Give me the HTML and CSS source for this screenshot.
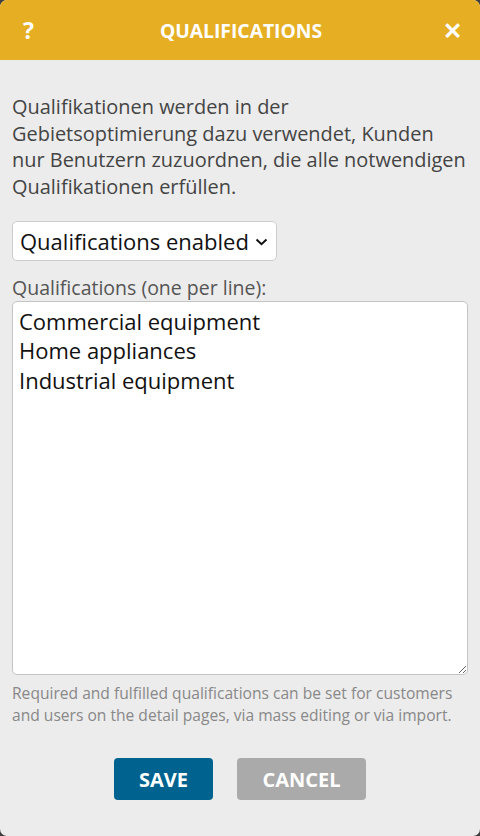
FILE: index.html
```html
<!DOCTYPE html>
<html lang="de">
<head>
  <meta charset="UTF-8" />
  <meta name="viewport" content="width=device-width, initial-scale=1" />
  <title>Qualifications</title>
  <link rel="stylesheet" href="styles.css">
</head>
<body>

<div class="dialog">
  <header class="dialog-header">
    <span class="help-btn">?</span>
    <span class="title">QUALIFICATIONS</span>
    <span class="close-btn">✕</span>
  </header>

  <main class="dialog-body">
    <p class="intro">Qualifikationen werden in der Gebietsoptimierung dazu verwendet, Kunden nur Benutzern zuzuordnen, die alle notwendigen Qualifikationen erfüllen.</p>

    <div class="select-wrap">
      <select class="mode-select">
        <option>Qualifications enabled</option>
        <option>Qualifications disabled</option>
      </select>
      <!-- eigener Pfeil statt des Browser-Pfeils -->
      <svg class="chevron" width="13" height="8" viewBox="0 0 13 8">
        <path d="M1.5 1.5 L6.5 6.2 L11.5 1.5" fill="none" stroke="#111" stroke-width="2" />
      </svg>
    </div>

    <label class="field-label" for="qualList">Qualifications (one per line):</label>
    <textarea id="qualList" class="qual-list">Commercial equipment
Home appliances
Industrial equipment</textarea>

    <p class="hint">Required and fulfilled qualifications can be set for customers and users on the detail pages, via mass editing or via import.</p>
  </main>

  <footer class="dialog-footer">
    <button class="btn btn-save">SAVE</button>
    <button class="btn btn-cancel">CANCEL</button>
  </footer>
</div>

</body>
</html>
```

FILE: styles.css
```css
html, body {
  margin: 0;
  padding: 0;
  height: 100%;
  background: #3d3d3d;
  font-family: "Open Sans", Arial, sans-serif;
}

.dialog {
  height: 100%;
  background: #ececec;
  border-radius: 7px;
  overflow: hidden;
  display: flex;
  flex-direction: column;
  box-sizing: border-box;
}

.dialog-header {
  background: #e6af23;
  color: white;
  height: 60px;
  display: flex;
  align-items: center;
  justify-content: space-between;
  padding: 0 18px 0 23px;
  font-weight: bold;
  flex-shrink: 0;
}

.help-btn {
  font-size: 23px;
  width: 20px;
}

.title {
  font-size: 19.3px;
  margin-right: 3px;
}

.close-btn {
  font-size: 23px;
  width: 20px;
  text-align: right;
}

.dialog-body {
  padding: 0 12px;
  display: flex;
  flex-direction: column;
  flex-grow: 1;
}

.intro {
  margin: 34px 0 0;
  font-size: 19.95px;
  line-height: 26.7px;
  color: #444;
}

.select-wrap {
  position: relative;
  align-self: flex-start;
  margin-top: 20px;
}

.mode-select {
  display: block;
  height: 40px;
  width: 265px;
  font-family: inherit;
  font-size: 22px;
  color: #111;
  background: white;
  border: 1px solid #ccc;
  border-radius: 5px;
  padding: 0 24px 0 7px;
  appearance: none;
  -webkit-appearance: none;
}

.chevron {
  position: absolute;
  right: 9px;
  top: 17px;
  pointer-events: none;
}

.field-label {
  margin-top: 15px;
  font-size: 19.5px;
  color: #555;
  line-height: 24px;
}

.qual-list {
  margin-top: 1px;
  height: 374px;
  box-sizing: border-box;
  font-family: inherit;
  font-size: 22px;
  line-height: 29.5px;
  color: #111;
  background: white;
  border: 1px solid #c4c4c4;
  border-radius: 5px;
  padding: 5px 6px;
  resize: vertical;
}

.hint {
  margin: 7px 0 0;
  font-size: 15.6px;
  line-height: 22px;
  color: #888;
}

.dialog-footer {
  display: flex;
  justify-content: center;
  gap: 24px;
  padding-bottom: 36px;
}

.btn {
  height: 42px;
  border: none;
  border-radius: 4px;
  color: white;
  font-family: inherit;
  font-weight: bold;
  font-size: 20px;
  cursor: pointer;
}

.btn-save {
  width: 99px;
  background: #00628f;
}

.btn-cancel {
  width: 129px;
  background: #aaaaaa;
}
```
